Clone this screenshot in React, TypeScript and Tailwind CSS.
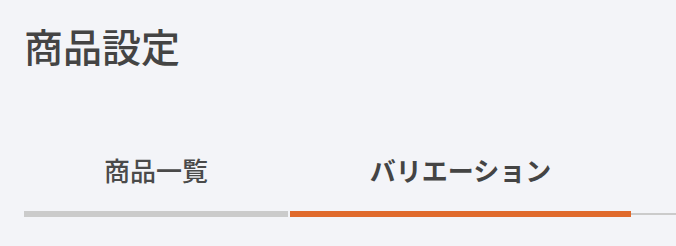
export default function App() {
  return (
    <div
      className="w-full h-[246px] bg-[#f3f4f8] pl-6 pt-[26px] overflow-hidden"
      style={{ fontFamily: '"Noto Sans CJK JP", "Noto Sans", sans-serif' }}
    >
      <h1 className="text-[39px] leading-none text-[#444444] font-medium">商品設定</h1>

      <div className="flex items-end mt-[92px]">
        <button className="w-[264px] shrink-0 flex flex-col items-center">
          <span className="text-[26px] leading-none font-medium text-[#4a4a4a] pb-[28px]">商品一覧</span>
          <span className="block w-full h-[6px] bg-[#cbcbcb]" />
        </button>
        <span className="w-[2px] shrink-0" />
        <button className="w-[341px] shrink-0 flex flex-col items-center">
          <span className="text-[26px] leading-none font-bold text-[#444444] pb-[28px]">バリエーション</span>
          <span className="block w-full h-[6px] bg-[#e06a2c]" />
        </button>
        <span className="flex-1 h-[2px] mb-[2px] bg-[#cbcbcb]" />
      </div>
    </div>
  );
}
